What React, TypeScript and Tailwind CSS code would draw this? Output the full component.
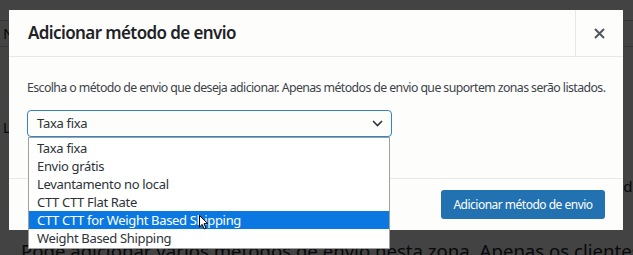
import React from "react";

const options = [
  "Taxa fixa",
  "Envio grátis",
  "Levantamento no local",
  "CTT CTT Flat Rate",
  "CTT CTT for Weight Based Shipping",
  "Weight Based Shipping",
];

export default function App() {
  return (
    <div
      className="relative w-[633px] h-[255px] overflow-hidden bg-[#f0f0f1]"
      style={{ fontFamily: '"Noto Sans", "Open Sans", sans-serif' }}
    >
      {/* page behind */}
      <div className="flex flex-col text-[#1d2327]">
        <div className="h-[21px] border-b border-[#c3c4c7]" />
        <div className="h-[26px] border-b border-[#c3c4c7] pl-[3px] flex items-center text-[15px]">
          Nome
        </div>
        <div className="h-[70px]" />
        <div className="pl-[3px] text-[14px] h-[40px]">Limite</div>
        <div className="h-[18px]" />
        <div className="flex justify-end text-[15px] h-[50px]">
          <span className="-mr-[8px]">de</span>
        </div>
        <div className="pl-[21px] text-[18.6px] leading-[22px] whitespace-nowrap mt-[15px]">
          Pode adicionar vários métodos de envio nesta zona. Apenas os clientes dentro da zona os verão.
        </div>
      </div>

      {/* overlay */}
      <div className="absolute inset-0 bg-[#000000]/[0.72]" />

      {/* modal */}
      <div className="absolute left-[9px] top-[10px] w-[614px] h-[220px] bg-[#fdfdfb] flex flex-col">
        <div className="h-[47px] flex border-b border-[#e8e8e6] shrink-0">
          <div className="flex-1 flex items-center pl-[19px] text-[17px] font-semibold text-[#1d2327] tracking-[-0.6px]">
            Adicionar método de envio
          </div>
          <div className="w-[48px] border-l border-[#e8e8e6] flex items-center justify-center">
            <svg width="11" height="11" viewBox="0 0 11 11">
              <path d="M1 1L10 10M10 1L1 10" stroke="#50575e" strokeWidth="2" />
            </svg>
          </div>
        </div>
        <div className="flex-1 px-[18px] pt-[22px]">
          <p className="text-[12.3px] text-[#3c434a] leading-[18px] whitespace-nowrap tracking-[-0.58px]">
            Escolha o método de envio que deseja adicionar. Apenas métodos de envio que suportem zonas serão listados.
          </p>
          <div className="mt-[13px] w-[365px] h-[27px] border border-[#3582c4] rounded-[4px] flex items-center justify-between pl-[9px] pr-[8px] text-[13px] text-[#2c3338] tracking-[-0.3px]">
            <span>Taxa fixa</span>
            <svg width="11" height="7" viewBox="0 0 11 7">
              <path d="M1 1L5.5 5.5L10 1" stroke="#2c3338" strokeWidth="1.6" fill="none" />
            </svg>
          </div>
        </div>
        <div className="h-[52px] border-t border-[#e8e8e6] flex items-center justify-end pr-[18px] shrink-0">
          <button className="h-[29px] w-[164px] bg-[#2271b1] rounded-[3px] text-white text-[12px] whitespace-nowrap tracking-[-0.5px]">
            Adicionar método de envio
          </button>
        </div>
      </div>

      {/* dropdown list */}
      <div className="absolute left-[28px] top-[137px] w-[362px] bg-white border border-[#a0a0a0] flex flex-col py-[1px]">
        {options.map((o, i) => (
          <div
            key={o}
            className={
              "h-[18px] pl-[8px] flex items-center text-[13px] leading-none tracking-[-0.33px] " +
              (i === 4 ? "bg-[#0a78e0] text-white" : "text-[#2c3338]")
            }
          >
            {o}
          </div>
        ))}
      </div>

      {/* cursor */}
      <svg className="absolute left-[199px] top-[215px]" width="10" height="15" viewBox="0 0 10 15">
        <path d="M0.5 0.5L0.5 12L3.2 9.4L5.2 14L7 13.2L5 8.7L8.8 8.7Z" fill="white" stroke="black" strokeWidth="1" />
      </svg>
    </div>
  );
}
